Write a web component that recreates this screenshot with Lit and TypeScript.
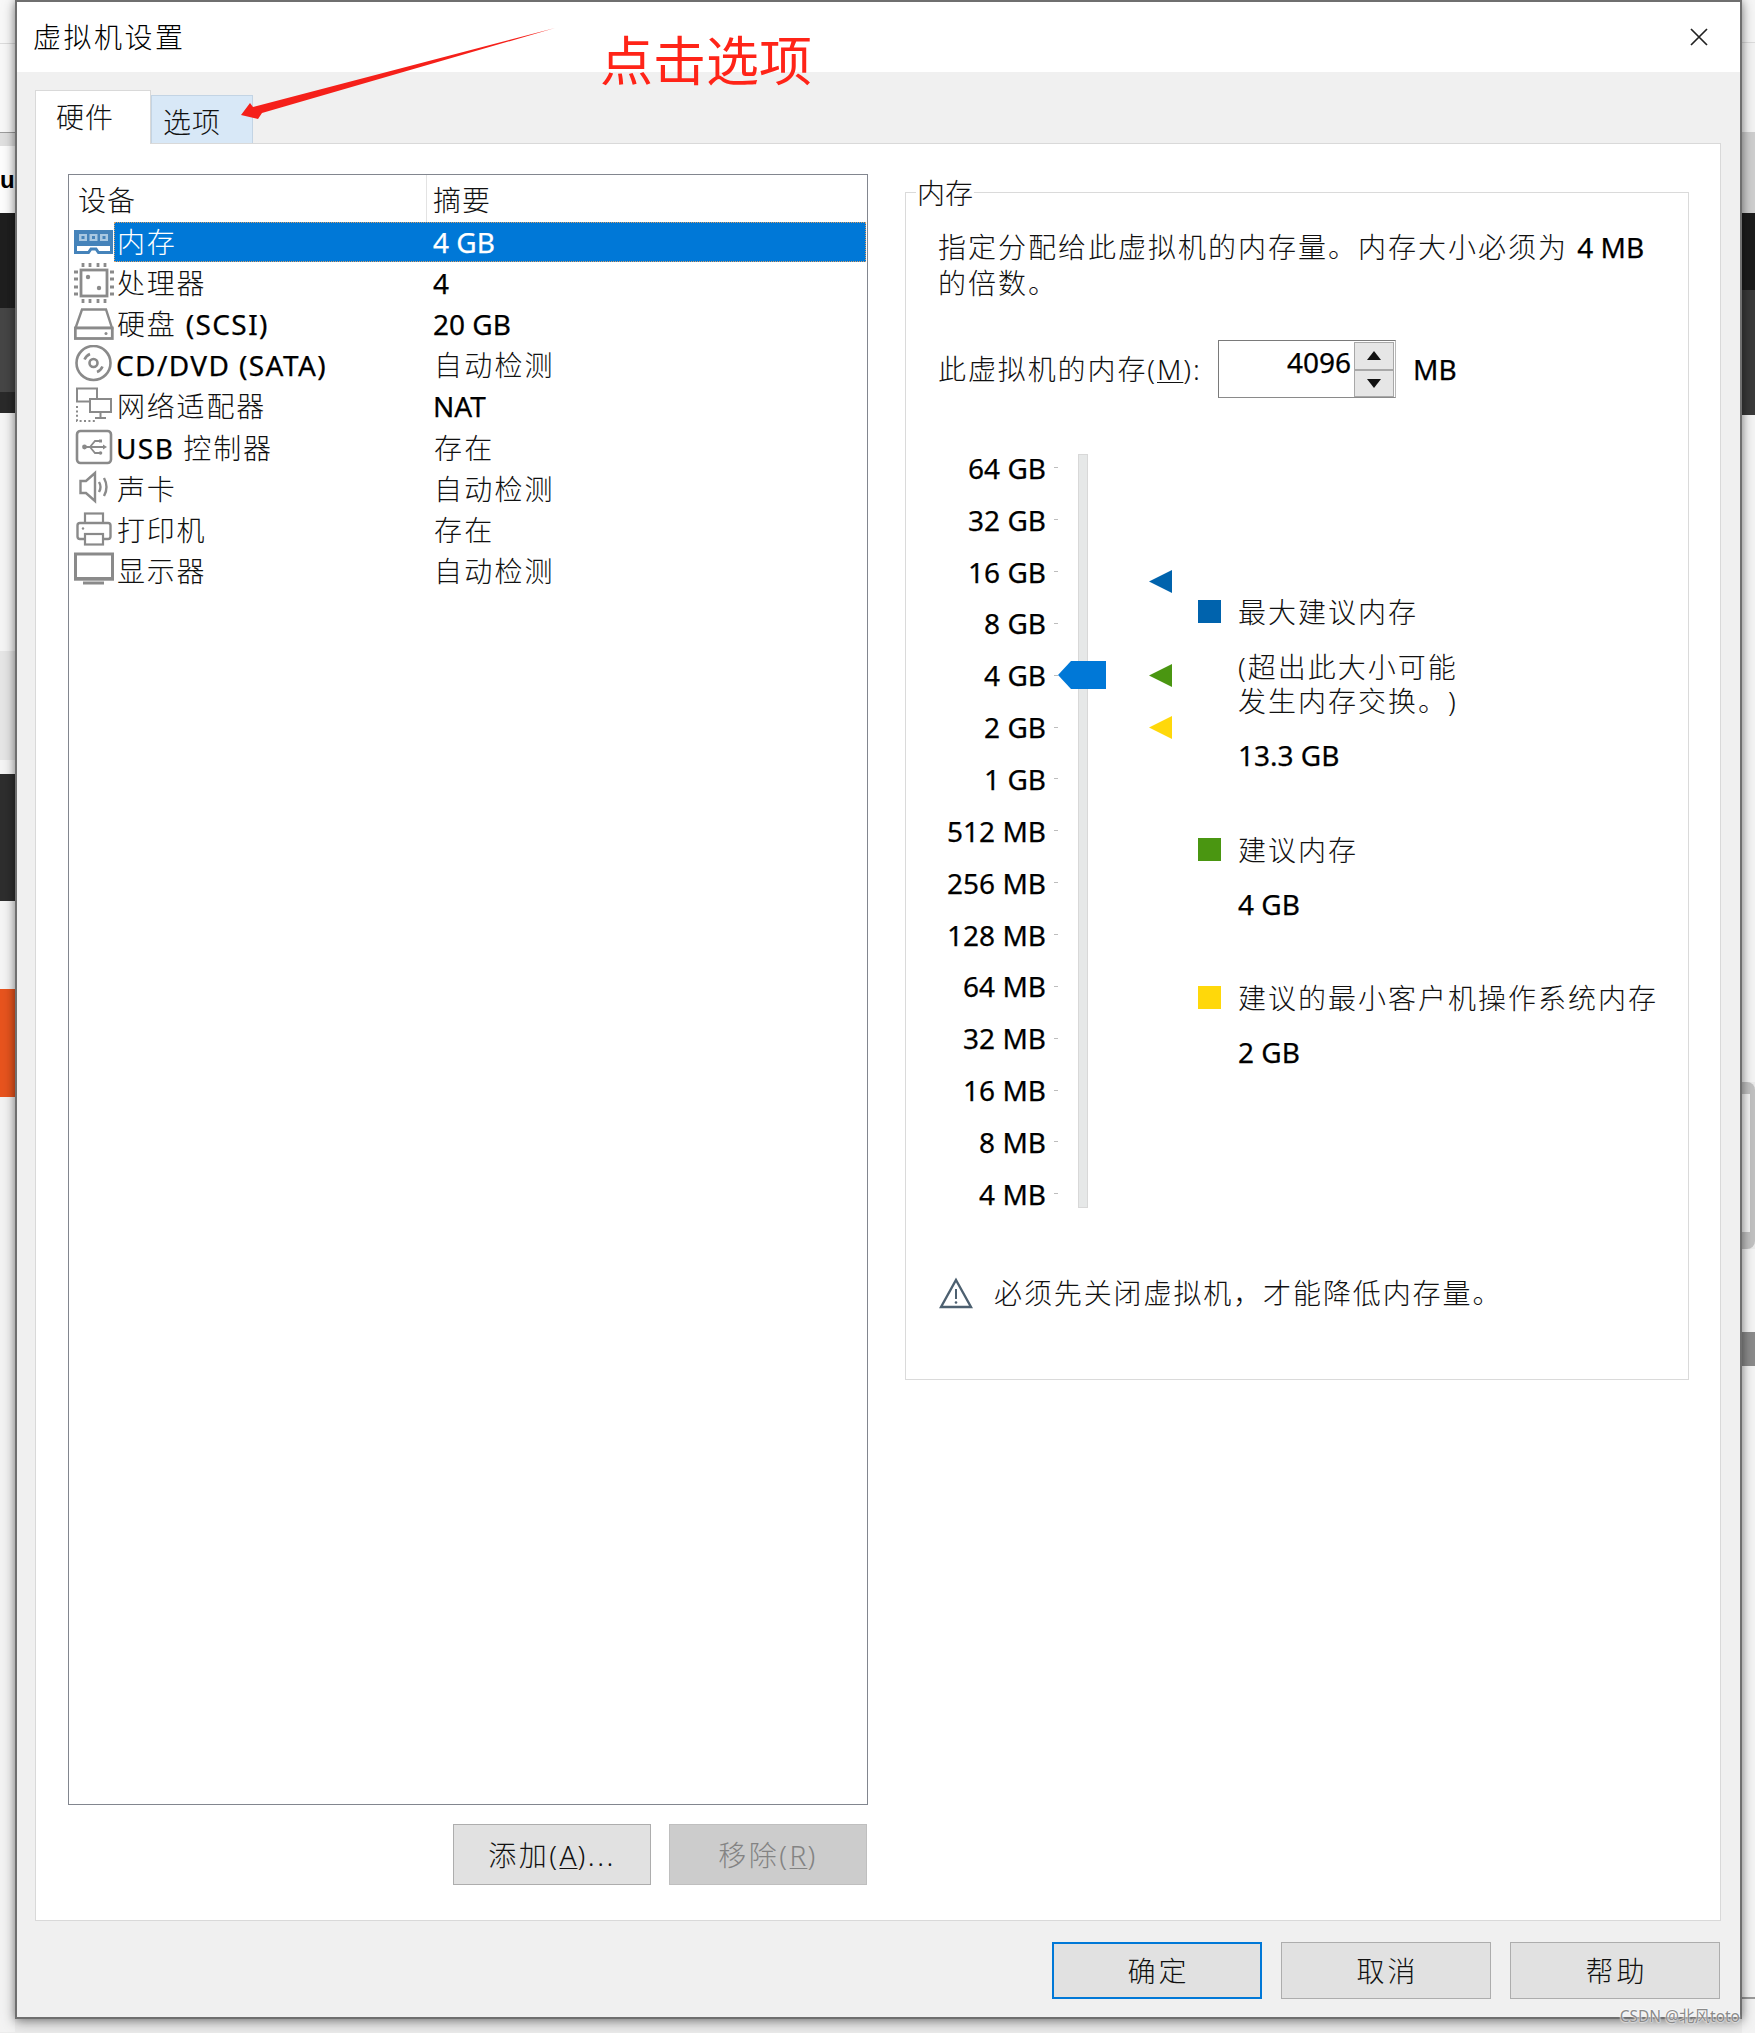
import { LitElement, html, css, svg } from "lit";
import { customElement } from "lit/decorators.js";
import { styleMap } from "lit/directives/style-map.js";

const G = "#8a8a8a";
const B = "#4583ba";
const icons: Record<string, unknown> = {
  mem: svg`<path d="M1.5 9.5H37.5V30.5H24.5L22 27H17L14.5 30.5H1.5Z" fill="#fff" stroke="${B}" stroke-width="3"/><rect x="0" y="8" width="39" height="16" fill="${B}"/><rect x="5" y="12" width="8" height="7" fill="#a9c8e2"/><rect x="15.5" y="12" width="8" height="7" fill="#a9c8e2"/><rect x="26" y="12" width="8" height="7" fill="#a9c8e2"/><rect x="7.5" y="14" width="3" height="3" fill="${B}"/><rect x="18" y="14" width="3" height="3" fill="${B}"/><rect x="28.5" y="14" width="3" height="3" fill="${B}"/>`,
  cpu: svg`<rect x="7" y="7" width="26" height="26" fill="#fff" stroke="${G}" stroke-width="2.8"/><circle cx="14" cy="14" r="2.2" fill="${G}"/><circle cx="25" cy="25" r="2.2" fill="${G}"/><path d="M9 0v4M16 0v4M24 0v4M31 0v4M9 36v4M16 36v4M24 36v4M31 36v4M0 9h4M0 16h4M0 24h4M0 31h4M36 9h4M36 16h4M36 24h4M36 31h4" stroke="${G}" stroke-width="2.8" fill="none"/>`,
  hdd: svg`<path d="M8 5.5H32L38 24H1.5Z" fill="#fff" stroke="${G}" stroke-width="2.4"/><rect x="1.3" y="24" width="37" height="10.5" fill="#fff" stroke="${G}" stroke-width="2.8"/><circle cx="32" cy="29.5" r="1.5" fill="${G}"/>`,
  cd: svg`<circle cx="19.5" cy="18" r="17" fill="#fff" stroke="${G}" stroke-width="2.6"/><circle cx="19.5" cy="18" r="4" fill="none" stroke="${G}" stroke-width="2.6"/><path d="M10.5 14.5A10 10 0 0 1 16 9M28.5 21.5A10 10 0 0 1 23 27" fill="none" stroke="${G}" stroke-width="2.6"/>`,
  net: svg`<rect x="3" y="2.5" width="20" height="13" fill="#fff" stroke="${G}" stroke-width="2"/><rect x="16" y="13" width="21" height="13" fill="#fff" stroke="${G}" stroke-width="2"/><path d="M3 20v15h19" fill="none" stroke="${G}" stroke-width="2" stroke-dasharray="2 2.4"/><path d="M26.5 26v5M21 32h11" fill="none" stroke="${G}" stroke-width="2"/>`,
  usb: svg`<rect x="3" y="3" width="34" height="32" rx="3.5" fill="#fff" stroke="${G}" stroke-width="2.6"/><path d="M11 19H30M16 19L21 13H25M16 19L21 25H25" fill="none" stroke="${G}" stroke-width="1.8"/><circle cx="10.5" cy="19" r="2.4" fill="${G}"/><path d="M29 16.5L33 19L29 21.5Z" fill="${G}"/><rect x="25" y="11.5" width="3" height="3" fill="${G}"/><circle cx="26.5" cy="25" r="1.8" fill="${G}"/>`,
  snd: svg`<path d="M6.5 12H12L21 4V32L12 24H6.5Z" fill="#fff" stroke="${G}" stroke-width="2.4"/><path d="M25 13Q28 18 25 23M30 9Q35 18 30 27" fill="none" stroke="${G}" stroke-width="2.4"/>`,
  prn: svg`<rect x="11" y="3.5" width="18" height="11" fill="#fff" stroke="${G}" stroke-width="2.2"/><rect x="3.5" y="13" width="33" height="16" rx="2.5" fill="#fff" stroke="${G}" stroke-width="2.4"/><rect x="11" y="24" width="18" height="10.5" fill="#fff" stroke="${G}" stroke-width="2.2"/><circle cx="9" cy="18.5" r="1.2" fill="${G}"/>`,
  mon: svg`<rect x="1.5" y="3" width="37" height="25" fill="#fff" stroke="${G}" stroke-width="3"/><rect x="0" y="26" width="40" height="3.4" fill="${G}"/><rect x="9" y="30.5" width="21" height="3" fill="${G}"/>`,
};

const rows = [
  ["mem", html`内存`, "4 GB"],
  ["cpu", html`处理器`, "4"],
  ["hdd", html`硬盘 <span class="lat w">(SCSI)</span>`, "20 GB"],
  ["cd", html`<span class="lat w lead">CD/DVD (SATA)</span>`, "自动检测"],
  ["net", html`网络适配器`, "NAT"],
  ["usb", html`<span class="lat w lead">USB</span> 控制器`, "存在"],
  ["snd", html`声卡`, "自动检测"],
  ["prn", html`打印机`, "存在"],
  ["mon", html`显示器`, "自动检测"],
] as const;

const ticks = ["64 GB", "32 GB", "16 GB", "8 GB", "4 GB", "2 GB", "1 GB", "512 MB", "256 MB", "128 MB", "64 MB", "32 MB", "16 MB", "8 MB", "4 MB"];
const TICK = 51.85;
const markers = [
  { idx: 2.18, color: "#0063ad" },
  { idx: 4, color: "#4a9611" },
  { idx: 5, color: "#ffd80a" },
];
const leftBands: [number, string][] = [
  [43, "#f8f8f8"], [1, "#dcdcdc"], [88, "#f8f8f8"], [1, "#9c9c9c"], [13, "#e0e0e0"], [67, "#fdfdfd"], [95, "#1f1f1f"], [84, "#464646"], [21, "#2a2a2a"],
  [238, "#f5f5f5"], [109, "#e6e6e6"], [14, "#f5f5f5"], [127, "#2e2e2e"], [88, "#f5f5f5"], [108, "#e8541e"], [935, "#f3f3f3"],
];

@customElement("app-root")
export class AppRoot extends LitElement {
  static styles = css`
    :host {
      display: block; position: relative; width: 1755px; height: 2033px; overflow: hidden; background: #ececec;
      font-family: "Noto Sans", "Noto Sans CJK SC", sans-serif; font-size: 28px; color: #111; line-height: 36px; font-weight: 300;
      text-spacing-trim: space-all;
    }
    * { box-sizing: border-box; }
    .lat { letter-spacing: 0; font-weight: 400; color: #000; -webkit-text-stroke: .25px currentColor; }
    .lat.w { letter-spacing: 1.4px; }
    .lat.lead { margin-left: -1px; }
    .sel .lat { color: #fff; }
    .stage { display: flex; height: 2033px; }
    .strip { display: flex; flex-direction: column; flex: none; overflow: hidden; }
    .strip.l { width: 15px; }
    .strip.r { width: 13px; }
    .band { flex: none; }
    .bracket { flex: none; height: 167px; background: #f5f5f5; border: solid #c2c2c2; border-width: 12px 5px 17px 0; border-radius: 0 8px 8px 0; }
    .u { font: bold 24px/26px "Liberation Sans", sans-serif; color: #000; position: absolute; left: 0; top: 167px; }
    .dialog {
      flex: none; width: 1727px; height: 2019px; border: 2px solid #6f6f6f; background: #f0f0f0;
      display: flex; flex-direction: column; position: relative; z-index: 1;
      box-shadow: 0 3px 12px rgba(0,0,0,.38), 0 0 7px rgba(0,0,0,.22);
    }
    .title { height: 70px; flex: none; background: #fff; display: flex; align-items: center; justify-content: space-between; padding: 0 29px 0 16px; letter-spacing: 2.5px; color: #000; }
    .close { width: 24px; height: 24px; display: block; }
    .tabs { height: 71px; flex: none; display: flex; align-items: flex-end; padding-left: 18px; }
    .tab { display: flex; letter-spacing: 1px; }
    .tab.on { width: 116px; height: 54px; margin-bottom: -1px; background: #fff; border: 1px solid #d9d9d9; border-bottom: 0; padding: 8px 0 0 20px; position: relative; z-index: 1; }
    .tab.off { width: 102px; height: 48px; background: #d8e8f7; border: 1px solid #c3d4e4; border-bottom: 0; padding: 8px 0 0 11px; }
    .panel { flex: none; height: 1778px; margin: 0 19px 0 18px; background: #fff; border: 1px solid #d9d9d9; display: flex; padding: 30px 0 0 32px; gap: 37px; }
    .left { width: 800px; flex: none; display: flex; flex-direction: column; }
    .list { height: 1631px; border: 1px solid #82868f; flex: none; }
    .head { display: flex; height: 47px; }
    .head div { letter-spacing: 1px; line-height: 50px; }
    .h1 { width: 358px; padding-left: 9px; border-right: 1px solid #e3e3e3; height: 47px; }
    .h2 { padding-left: 6px; }
    .row { display: flex; height: 41.12px; }
    .ico { width: 45px; flex: none; padding-left: 5px; }
    .ico svg { display: block; width: 40px; height: 40px; }
    .main { flex: 1; display: flex; height: 40px; line-height: 40px; letter-spacing: 1.8px; margin-right: 1px; }
    .main.sel { background: #0078d7; color: #fff; outline: 1px dotted #d9a066; outline-offset: -1px; }
    .name { width: 319px; padding-left: 3px; flex: none; }
    .sel .name { padding-left: 3px; }
    .sum { padding-left: 1px; letter-spacing: 2.2px; }
    .btns { display: flex; justify-content: flex-end; gap: 18px; margin-top: 19px; padding-right: 1px; }
    .btn { background: #e1e1e1; border: 1px solid #adadad; color: #111; display: flex; align-items: center; justify-content: center; letter-spacing: 2.5px; }
    .btn u { letter-spacing: 1px; text-underline-offset: 2px; text-decoration-thickness: 1px; }
    .btn.small { width: 198px; height: 61px; }
    .btn.dis { background: #cccccc; border-color: #bfbfbf; color: #838383; }
    .group { width: 784px; height: 1188px; margin-top: 18px; flex: none; border: 1px solid #dadada; position: relative; padding: 36px 0 0 32px; }
    .legend { position: absolute; left: 10px; top: -18px; background: #fff; padding: 0 1px; letter-spacing: 0; }
    .desc { letter-spacing: 2px; width: 740px; }
    .memrow { display: flex; align-items: center; margin-top: 39px; height: 58px; }
    .memlabel { width: 280px; flex: none; letter-spacing: 1.9px; }
    .memlabel u { text-underline-offset: 2px; text-decoration-thickness: 1px; }
    .spin { width: 178px; height: 58px; flex: none; display: flex; border: 1px solid #7a7a7a; border-right-color: #b8b8b8; border-bottom-color: #8a8a8a; }
    .val { flex: 1; text-align: right; padding-right: 3px; line-height: 42px; }
    .arrows { width: 41px; flex: none; display: flex; flex-direction: column; padding: 1px 1px 0 0; }
    .arr { flex: 1; background: #e6e6e6; border: 1px solid #a8a8a8; display: flex; align-items: center; justify-content: center; }
    .arr svg { width: 14px; height: 9px; display: block; }
    .unit { margin-left: 17px; }
    .scale { display: flex; margin-top: 44px; height: 780px; position: relative; }
    .labels { width: 120px; flex: none; display: flex; flex-direction: column; }
    .lab { height: ${TICK}px; display: flex; align-items: center; justify-content: flex-end; gap: 8px; white-space: nowrap; }
    .lab i { display: block; width: 4px; height: 1px; background: #bdbdbd; }
    .track { width: 10px; height: 754px; margin: 12px 0 0 20px; flex: none; background: #e6e8e8; border: 1px solid #d8d8d8; position: relative; }
    .thumb { position: absolute; left: -21px; top: 206px; width: 48px; height: 28px; display: block; }
    .mark { position: absolute; left: 211px; width: 23px; height: 23px; display: block; }
    .info { margin-left: 110px; flex: none; width: 460px; padding-top: 152px; }
    .lt { display: flex; gap: 17px; align-items: center; letter-spacing: 2px; height: 36px; white-space: nowrap; }
    .sq { width: 23px; height: 23px; flex: none; margin-top: -2px; }
    .iv { margin-left: 40px; margin-top: 18px; }
    .ip { margin-left: 40px; margin-top: 20px; line-height: 34px; letter-spacing: 2px; white-space: nowrap; }
    .iv.top19 { margin-top: 19px; }
    .gp { margin-top: 59px; }
    .gp2 { margin-top: 58px; }
    .warn { display: flex; align-items: center; gap: 21px; margin-top: 53px; letter-spacing: 1.9px; padding-left: 1px; }
    .warn svg { width: 34px; height: 32px; display: block; }
    .foot { flex: 1; display: flex; justify-content: flex-end; gap: 19px; padding: 21px 20px 0 0; }
    .foot .btn { width: 210px; height: 57px; letter-spacing: 3px; text-indent: 3px; }
    .foot .ok { border: 2px solid #0078d7; }
    .anno { position: absolute; left: 0; top: 0; width: 900px; height: 140px; z-index: 3; display: block; pointer-events: none; }
    .annot { position: absolute; left: 600px; top: 22px; font-size: 53px; line-height: 72px; color: #ff2418; z-index: 3; font-weight: 400; font-family: "Noto Sans CJK SC", sans-serif; white-space: nowrap; }
    .wm { position: absolute; right: 15px; top: 2006px; font-size: 15.5px; line-height: 20px; color: #8a8a8a; z-index: 3; font-weight: 400; text-shadow: 0 0 2px #fff, 0 0 2px #fff; letter-spacing: 0; white-space: nowrap; }
  `;

  private band(h: number, c: string) {
    return html`<div class="band" style=${styleMap({ height: h + "px", background: c })}></div>`;
  }

  render() {
    return html`
      <div class="stage">
        <div class="strip l">${leftBands.map(([h, c]) => this.band(h, c))}</div>
        <div class="dialog">
          <div class="title"><span>虚拟机设置</span>
            <svg class="close" viewBox="0 0 24 24"><path d="M4 4L20 20M20 4L4 20" stroke="#222" stroke-width="1.7" fill="none"/></svg>
          </div>
          <div class="tabs"><div class="tab on">硬件</div><div class="tab off">选项</div></div>
          <div class="panel">
            <div class="left">
              <div class="list">
                <div class="head"><div class="h1">设备</div><div class="h2">摘要</div></div>
                ${rows.map(([ic, n, v], i) => html`
                  <div class="row">
                    <div class="ico"><svg viewBox="0 0 40 40">${icons[ic]}</svg></div>
                    <div class="main ${i === 0 ? "sel" : ""}"><div class="name">${n}</div><div class=${/[A-Z0-9]/.test(v) ? "lat" : "sum"}>${v}</div></div>
                  </div>`)}
              </div>
              <div class="btns">
                <div class="btn small">添加(<u>A</u>)...</div>
                <div class="btn small dis">移除(<u>R</u>)</div>
              </div>
            </div>
            <div class="group">
              <div class="legend">内存</div>
              <div class="desc">指定分配给此虚拟机的内存量。内存大小必须为 <span class="lat">4 MB</span><br />的倍数。</div>
              <div class="memrow">
                <div class="memlabel">此虚拟机的内存(<u>M</u>):</div>
                <div class="spin">
                  <div class="val lat">4096</div>
                  <div class="arrows">
                    <div class="arr"><svg viewBox="0 0 14 9"><path d="M7 0L14 9H0Z" fill="#111"/></svg></div>
                    <div class="arr"><svg viewBox="0 0 14 9"><path d="M7 9L14 0H0Z" fill="#111"/></svg></div>
                  </div>
                </div>
                <div class="unit lat">MB</div>
              </div>
              <div class="scale">
                <div class="labels">${ticks.map((t) => html`<div class="lab"><span class="lat">${t}</span><i></i></div>`)}</div>
                <div class="track">
                  <svg class="thumb" viewBox="0 0 48 28"><path d="M13 0H48V28H13L0 14Z" fill="#0078d7"/></svg>
                </div>
                ${markers.map((m) => html`
                  <svg class="mark" style=${styleMap({ top: 26 + m.idx * TICK - 11.5 + "px" })} viewBox="0 0 23 23"><path d="M23 0V23L0 11.5Z" fill=${m.color}/></svg>`)}
                <div class="info">
                  <div class="lt"><div class="sq" style="background:#0063ad"></div>最大建议内存</div>
                  <div class="ip">(超出此大小可能<br />发生内存交换。)</div>
                  <div class="iv top19 lat">13.3 GB</div>
                  <div class="lt gp"><div class="sq" style="background:#4a9611"></div>建议内存</div>
                  <div class="iv lat">4 GB</div>
                  <div class="lt gp2"><div class="sq" style="background:#ffd80a"></div>建议的最小客户机操作系统内存</div>
                  <div class="iv lat">2 GB</div>
                </div>
              </div>
              <div class="warn">
                <svg viewBox="0 0 34 32"><path d="M17 3L32 30H2Z" fill="#fff" stroke="#4d6070" stroke-width="2.4"/><path d="M17 12V22" stroke="#4d6070" stroke-width="2"/><circle cx="17" cy="25.5" r="1.3" fill="#4d6070"/></svg>
                <span>必须先关闭虚拟机，才能降低内存量。</span>
              </div>
            </div>
          </div>
          <div class="foot">
            <div class="btn ok">确定</div><div class="btn">取消</div><div class="btn">帮助</div>
          </div>
        </div>
        <div class="strip r">
          ${this.band(42, "#f6f6f6")}${this.band(1, "#dcdcdc")}${this.band(89, "#f4f4f4")}${this.band(81, "#cfcfcf")}${this.band(77, "#1c1c1c")}${this.band(125, "#3a3a3a")}${this.band(667, "#f5f5f5")}
          <div class="bracket"></div>
          ${this.band(83, "#f5f5f5")}${this.band(34, "#8b8b8b")}${this.band(631, "#f5f5f5")}${this.band(2, "#9a9a9a")}${this.band(34, "#f3f3f3")}
        </div>
      </div>
      <div class="u">u</div>
      <svg class="anno" viewBox="0 0 900 140"><path d="M241 115L250 103L253 107L555 28L262 113L258 119Z" fill="#f5201a"/></svg>
      <div class="annot">点击选项</div>
      <div class="wm">CSDN @北风toto</div>
    `;
  }
}
